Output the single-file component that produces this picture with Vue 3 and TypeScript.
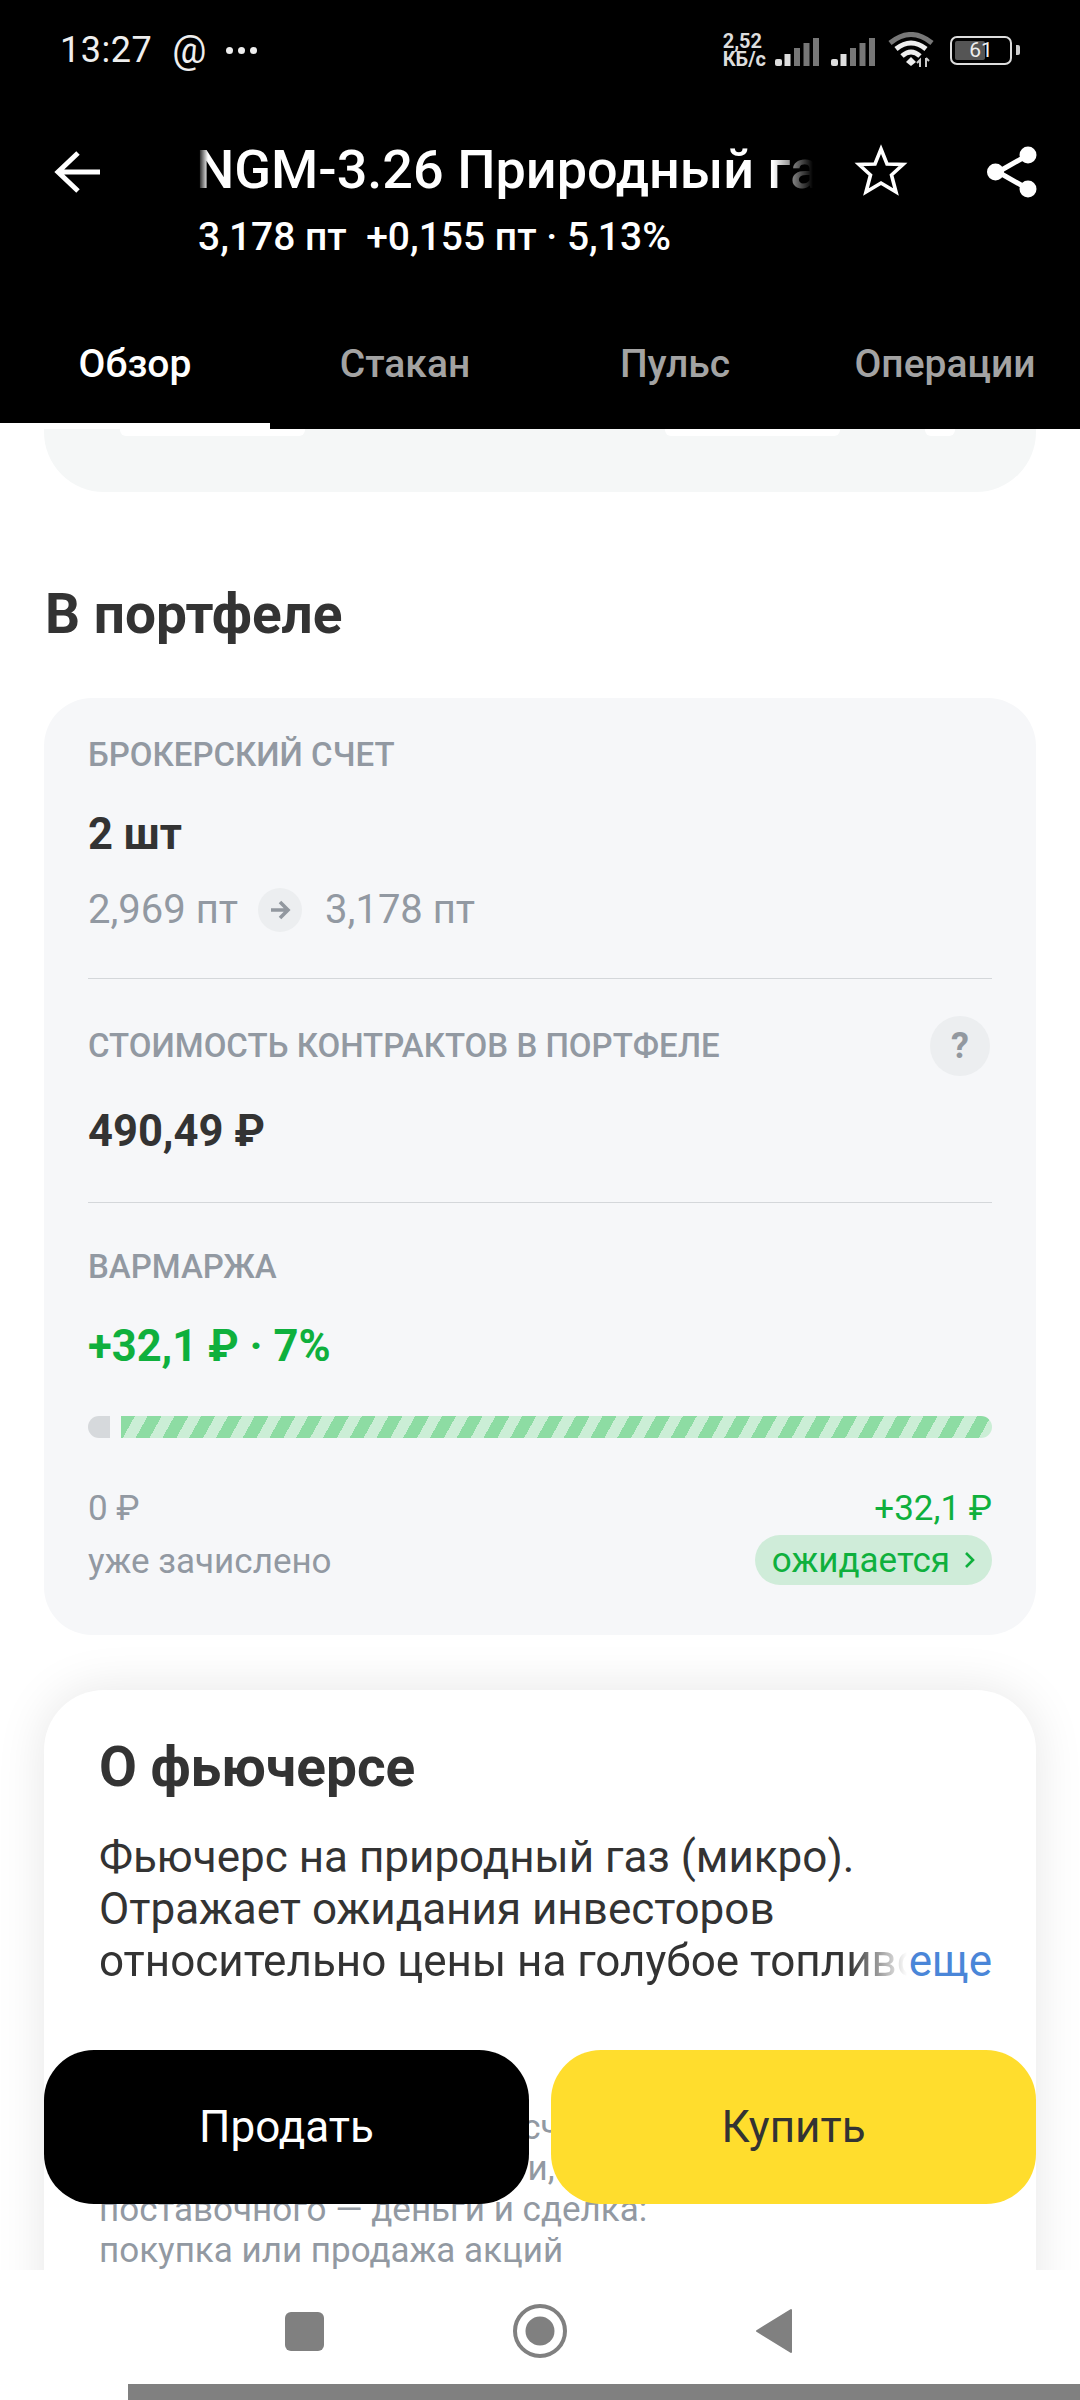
<script setup lang="ts">
const tabs: string[] = ['Обзор', 'Стакан', 'Пульс', 'Операции']
</script>

<template>
  <div class="page">
    <header class="top">
      <div class="status">
        <div class="status-left">
          <span class="time">13:27</span>
          <span class="at">@</span>
          <span class="dots">
            <i></i><i></i><i></i>
          </span>
        </div>
        <div class="status-right">
          <div class="speed"><span>2,52</span><span>КБ/с</span></div>
          <svg class="signal" width="44" height="28" viewBox="0 0 44 28">
            <rect x="0" y="21" width="7" height="7" rx="2" fill="#ddd" />
            <rect x="9.5" y="16" width="6" height="12" fill="#ddd" />
            <rect x="19" y="10" width="6" height="18" fill="#777" />
            <rect x="28.5" y="5" width="6" height="23" fill="#777" />
            <rect x="38" y="0" width="6" height="28" fill="#777" />
          </svg>
          <svg class="signal" width="44" height="28" viewBox="0 0 44 28">
            <rect x="0" y="21" width="7" height="7" rx="2" fill="#ddd" />
            <rect x="9.5" y="16" width="6" height="12" fill="#ddd" />
            <rect x="19" y="10" width="6" height="18" fill="#777" />
            <rect x="28.5" y="5" width="6" height="23" fill="#777" />
            <rect x="38" y="0" width="6" height="28" fill="#777" />
          </svg>
          <svg class="wifi" width="46" height="36" viewBox="0 0 46 36">
            <path d="M2 11 Q23 -6 44 11" fill="none" stroke="#777" stroke-width="5" />
            <path d="M8 17 Q23 5 38 17" fill="none" stroke="#eee" stroke-width="5" />
            <path d="M14 24 Q23 16 32 24" fill="none" stroke="#eee" stroke-width="5" />
            <path d="M18 30 L23 25 L28 30 L23 34 Z" fill="#eee" />
            <path d="M32 35 V28 L29 31 M38 26 V35 M38 26 L41 29" fill="none" stroke="#ccc" stroke-width="2" />
          </svg>
          <div class="battery">
            <div class="cell"><span class="fill"></span><span class="pct">61</span></div>
            <span class="nub"></span>
          </div>
        </div>
      </div>

      <div class="titlebar">
        <svg class="back" width="48" height="44" viewBox="0 0 48 44">
          <path d="M24 3 L4 22 L24 41 M4 22 H46" fill="none" stroke="#fff" stroke-width="5" />
        </svg>
        <div class="titles">
          <div class="title"><span class="title-text">NGM-3.26 Природный газ</span></div>
          <div class="sub">3,178 пт&nbsp; +0,155 пт · 5,13%</div>
        </div>
        <svg class="star" width="56" height="56" viewBox="0 0 56 56">
          <path d="M28 7 L34 22 L50 22.5 L38.5 33 L43 50 L28 41 L13 50 L17.5 33 L6 22.5 L22 22 Z" fill="none" stroke="#fff" stroke-width="3.6" />
        </svg>
        <svg class="share" width="52" height="56" viewBox="0 0 52 56">
          <path d="M41 11 L11 28 L41 45" fill="none" stroke="#fff" stroke-width="5" />
          <circle cx="41" cy="11" r="8.5" fill="#fff" />
          <circle cx="8.5" cy="28" r="8.5" fill="#fff" />
          <circle cx="41" cy="45" r="8.5" fill="#fff" />
        </svg>
      </div>

      <nav class="tabs">
        <div v-for="(t, i) in tabs" :key="t" class="tab" :class="{ active: i === 0 }">{{ t }}</div>
      </nav>
    </header>

    <main class="content">
      <div class="stub">
        <span class="notch n1"></span>
        <span class="notch n2"></span>
        <span class="notch n3"></span>
      </div>

      <h2 class="heading">В портфеле</h2>

      <section class="card">
        <div class="block first">
          <div class="label">БРОКЕРСКИЙ СЧЕТ</div>
          <div class="big">2 шт</div>
          <div class="prices">
            <span>2,969 пт</span>
            <span class="arrow">
              <svg width="22" height="20" viewBox="0 0 22 20">
                <path d="M11 2 L19 10 L11 18 M19 10 H2" fill="none" stroke="#92989f" stroke-width="3.6" />
              </svg>
            </span>
            <span>3,178 пт</span>
          </div>
        </div>

        <div class="block second">
          <div class="label-row">
            <div class="label">СТОИМОСТЬ КОНТРАКТОВ В ПОРТФЕЛЕ</div>
            <div class="help">?</div>
          </div>
          <div class="big value">490,49 ₽</div>
        </div>

        <div class="block third">
          <div class="label">ВАРМАРЖА</div>
          <div class="big green margin">+32,1 ₽ · 7%</div>
          <div class="bar">
            <span class="bar-left"></span>
            <span class="bar-right"></span>
          </div>
          <div class="legend">
            <div class="legend-col">
              <span class="amount">0 ₽</span>
              <span class="note">уже зачислено</span>
            </div>
            <div class="legend-col end">
              <span class="amount green">+32,1 ₽</span>
              <span class="pill">
                ожидается
                <svg width="11" height="18" viewBox="0 0 11 18">
                  <path d="M2 2 L9 9 L2 16" fill="none" stroke="#0fb03d" stroke-width="2.6" />
                </svg>
              </span>
            </div>
          </div>
        </div>
      </section>

      <section class="about">
        <h2 class="about-title">О фьючерсе</h2>
        <p class="about-text">Фьючерс на природный газ (микро).<br />Отражает ожидания инвесторов</p>
        <div class="about-last">
          <span class="clip">относительно цены на голубое топливо</span>
          <span class="more">еще</span>
        </div>
        <p class="about-grey">
          Есть 2 вида фьючерса: расчетный<br />
          Итоги расчетного — деньги,<br />
          поставочного — деньги и сделка:<br />
          покупка или продажа акций
        </p>
      </section>

      <div class="actions">
        <button class="btn sell">Продать</button>
        <button class="btn buy">Купить</button>
      </div>
    </main>

    <footer class="nav">
      <div class="nav-icons">
        <span class="nav-square"></span>
        <svg class="nav-circle" width="54" height="54" viewBox="0 0 54 54">
          <circle cx="27" cy="27" r="25" fill="none" stroke="#808080" stroke-width="4" />
          <circle cx="27" cy="27" r="14.5" fill="#808080" />
        </svg>
        <svg class="nav-back" width="38" height="46" viewBox="0 0 38 46">
          <path d="M36 2 V44 L2 23 Z" fill="#808080" stroke="#808080" stroke-width="2" stroke-linejoin="round" />
        </svg>
      </div>
      <div class="home-bar"></div>
    </footer>
  </div>
</template>

<style scoped>
.page {
  width: 1080px;
  height: 2400px;
  display: flex;
  flex-direction: column;
  overflow: hidden;
  background: #fff;
  font-family: Roboto, "Noto Sans", sans-serif;
  color: #333;
}

/* ---------- header ---------- */
.top {
  height: 429px;
  flex: none;
  background: #000;
  color: #fff;
  display: flex;
  flex-direction: column;
}
.status {
  height: 100px;
  padding: 0 60px;
  display: flex;
  align-items: center;
  justify-content: space-between;
}
.status-left {
  display: flex;
  align-items: center;
  color: #eee;
}
.time {
  font-size: 36px;
  letter-spacing: 0.5px;
}
.at {
  font-size: 38px;
  margin-left: 20px;
}
.dots {
  display: flex;
  gap: 5px;
  margin-left: 20px;
}
.dots i {
  width: 7px;
  height: 7px;
  border-radius: 50%;
  background: #eee;
}
.status-right {
  display: flex;
  align-items: center;
}
.speed {
  display: flex;
  flex-direction: column;
  font-size: 20px;
  font-weight: 700;
  line-height: 18px;
  color: #ddd;
  margin-right: 9px;
}
.signal {
  margin-right: 12px;
  margin-top: 4px;
}
.wifi {
  margin: 0 16px 0 1px;
}
.battery {
  display: flex;
  align-items: center;
  gap: 4px;
}
.cell {
  position: relative;
  width: 62px;
  height: 29px;
  box-sizing: border-box;
  border: 2.5px solid #ddd;
  border-radius: 7px;
  display: flex;
  align-items: center;
  justify-content: center;
}
.fill {
  position: absolute;
  left: 3px;
  top: 3px;
  bottom: 3px;
  width: 30px;
  background: #555;
  border-radius: 2px;
}
.pct {
  position: relative;
  font-size: 21px;
  color: #eee;
}
.nub {
  width: 4px;
  height: 10px;
  background: #ccc;
  border-radius: 0 2px 2px 0;
}
.titlebar {
  height: 146px;
  display: flex;
  align-items: flex-start;
  padding-left: 54px;
}
.back {
  margin-top: 50px;
  flex: none;
}
.titles {
  width: 618px;
  margin-left: 96px;
  flex: none;
  padding-top: 40px;
}
.title {
  font-size: 54px;
  line-height: 60px;
  font-weight: 500;
  white-space: nowrap;
  overflow: hidden;
  -webkit-mask-image: linear-gradient(90deg, transparent 0, #000 10px, #000 575px, transparent 615px);
  mask-image: linear-gradient(90deg, transparent 0, #000 10px, #000 575px, transparent 615px);
}
.title-text {
  display: inline-block;
  margin-left: -2px;
}
.sub {
  margin-top: 14px;
  font-size: 39px;
  line-height: 46px;
  font-weight: 500;
}
.star {
  margin: 42px 0 0 37px;
  flex: none;
}
.share {
  margin: 44px 0 0 78px;
  flex: none;
}
.tabs {
  flex: 1;
  display: grid;
  grid-template-columns: repeat(4, 270px);
}
.tab {
  display: flex;
  align-items: center;
  justify-content: center;
  padding-top: 53px;
  font-size: 39px;
  font-weight: 500;
  color: #a3a3a3;
}
.tab.active {
  color: #fff;
  border-bottom: 6px solid #fff;
  padding-top: 59px;
}

/* ---------- content ---------- */
.content {
  position: relative;
  flex: 1;
  min-height: 0;
  overflow: hidden;
}
.stub {
  margin: 0 44px;
  height: 63px;
  background: #f5f7f7;
  border-radius: 0 0 60px 60px;
  display: flex;
  align-items: flex-start;
}
.notch {
  height: 7px;
  background: #fff;
  border-radius: 0 0 6px 6px;
}
.n1 {
  width: 185px;
  margin-left: 76px;
}
.n2 {
  width: 175px;
  margin-left: 360px;
}
.n3 {
  width: 30px;
  margin-left: 85px;
}
.heading {
  margin: 87px 0 0 45px;
  font-size: 55px;
  line-height: 70px;
  font-weight: 700;
  color: #333;
}
.card {
  margin: 49px 44px 0;
  padding: 0 44px;
  background: #f6f7f9;
  border-radius: 48px;
  height: 937px;
  box-sizing: border-box;
}
.block + .block {
  border-top: 1px solid #d4d7da;
}
.block.first {
  padding-top: 37px;
  height: 280px;
  box-sizing: border-box;
}
.block.second {
  height: 224px;
  box-sizing: border-box;
  padding-top: 36px;
}
.block.third {
  padding-top: 44px;
}
.label {
  font-size: 33px;
  line-height: 40px;
  font-weight: 500;
  color: #9299a2;
}
.big {
  margin-top: 30px;
  font-size: 43.5px;
  line-height: 60px;
  font-weight: 700;
  color: #333;
}
.prices {
  margin-top: 17px;
  display: flex;
  align-items: center;
  font-size: 40px;
  line-height: 56px;
  color: #9299a2;
}
.arrow {
  width: 44px;
  height: 44px;
  margin: 0 23px 0 20px;
  border-radius: 50%;
  background: #eceef0;
  display: flex;
  align-items: center;
  justify-content: center;
}
.label-row {
  display: flex;
  align-items: center;
  justify-content: space-between;
  height: 60px;
  margin-top: 1px;
}
.label-row .label {
  margin-top: 0;
}
.help {
  width: 60px;
  height: 60px;
  border-radius: 50%;
  background: #eceef0;
  color: #92989f;
  font-size: 36px;
  font-weight: 700;
  display: flex;
  align-items: center;
  justify-content: center;
  margin-right: 2px;
}
.big.value {
  margin-top: 26px;
}
.green {
  color: #0fb03d !important;
}
.big.margin {
  margin-top: 30px;
}
.bar {
  margin-top: 39px;
  height: 22px;
  display: flex;
  gap: 11px;
}
.bar-left {
  width: 22px;
  background: #d6d9dc;
  border-radius: 11px 0 0 11px;
}
.bar-right {
  flex: 1;
  border-radius: 0 11px 11px 0;
  background: repeating-linear-gradient(119deg, #8ddca3 0 12.2px, #cbeed6 12.2px 23.4px);
}
.legend {
  margin-top: 49px;
  display: flex;
  justify-content: space-between;
}
.legend-col {
  display: flex;
  flex-direction: column;
}
.legend-col.end {
  align-items: flex-end;
}
.amount {
  font-size: 35px;
  line-height: 44px;
  color: #9299a2;
}
.note {
  margin-top: 9px;
  font-size: 35px;
  line-height: 44px;
  color: #9299a2;
}
.pill {
  margin-top: 4px;
  height: 50px;
  padding: 0 17px;
  border-radius: 25px;
  background: #cfecd9;
  color: #0fb03d;
  font-size: 35px;
  display: flex;
  align-items: center;
  gap: 14px;
}
.about {
  margin: 55px 44px 0;
  padding: 46px 44px 0 56px;
  background: #fff;
  border-radius: 60px 60px 0 0;
  box-shadow: 0 0 50px rgba(0, 0, 0, 0.1);
  height: 700px;
  box-sizing: border-box;
}
.about-title {
  margin: 0 0 0 -1px;
  font-size: 55px;
  line-height: 62px;
  font-weight: 700;
  color: #333;
}
.about-text {
  margin: 33px 0 0 -1px;
  font-size: 44px;
  line-height: 52px;
  color: #333;
}
.about-last {
  position: relative;
  height: 52px;
  margin-left: -1px;
  font-size: 44px;
  line-height: 52px;
  white-space: nowrap;
}
.clip {
  display: block;
  width: 810px;
  overflow: hidden;
  -webkit-mask-image: linear-gradient(90deg, #000 750px, transparent 808px);
  mask-image: linear-gradient(90deg, #000 750px, transparent 808px);
}
.more {
  position: absolute;
  right: 0;
  top: 0;
  color: #4a86d8;
}
.about-grey {
  margin: 120px 0 0 -1px;
  font-size: 35px;
  line-height: 41px;
  color: #9299a2;
  white-space: nowrap;
}
.actions {
  position: absolute;
  left: 44px;
  right: 44px;
  top: 1621px;
  display: flex;
  gap: 22px;
}
.btn {
  flex: 1;
  height: 154px;
  border: none;
  border-radius: 50px;
  font-family: inherit;
  font-size: 44px;
}
.sell {
  background: #000;
  color: #fff;
}
.buy {
  background: #ffdd2d;
  color: #333;
}

/* ---------- nav ---------- */
.nav {
  flex: none;
  height: 130px;
  background: #fff;
  display: flex;
  flex-direction: column;
  position: relative;
}
.nav-icons {
  flex: 1;
  display: flex;
  align-items: center;
  padding-left: 285px;
  padding-top: 8px;
}
.nav-circle {
  margin-left: 189px;
}
.nav-back {
  margin-left: 188px;
}
.nav-square {
  width: 39px;
  height: 39px;
  border-radius: 6px;
  background: #808080;
}
.home-bar {
  height: 16px;
  margin-left: 128px;
  background: #808080;
}
</style>
